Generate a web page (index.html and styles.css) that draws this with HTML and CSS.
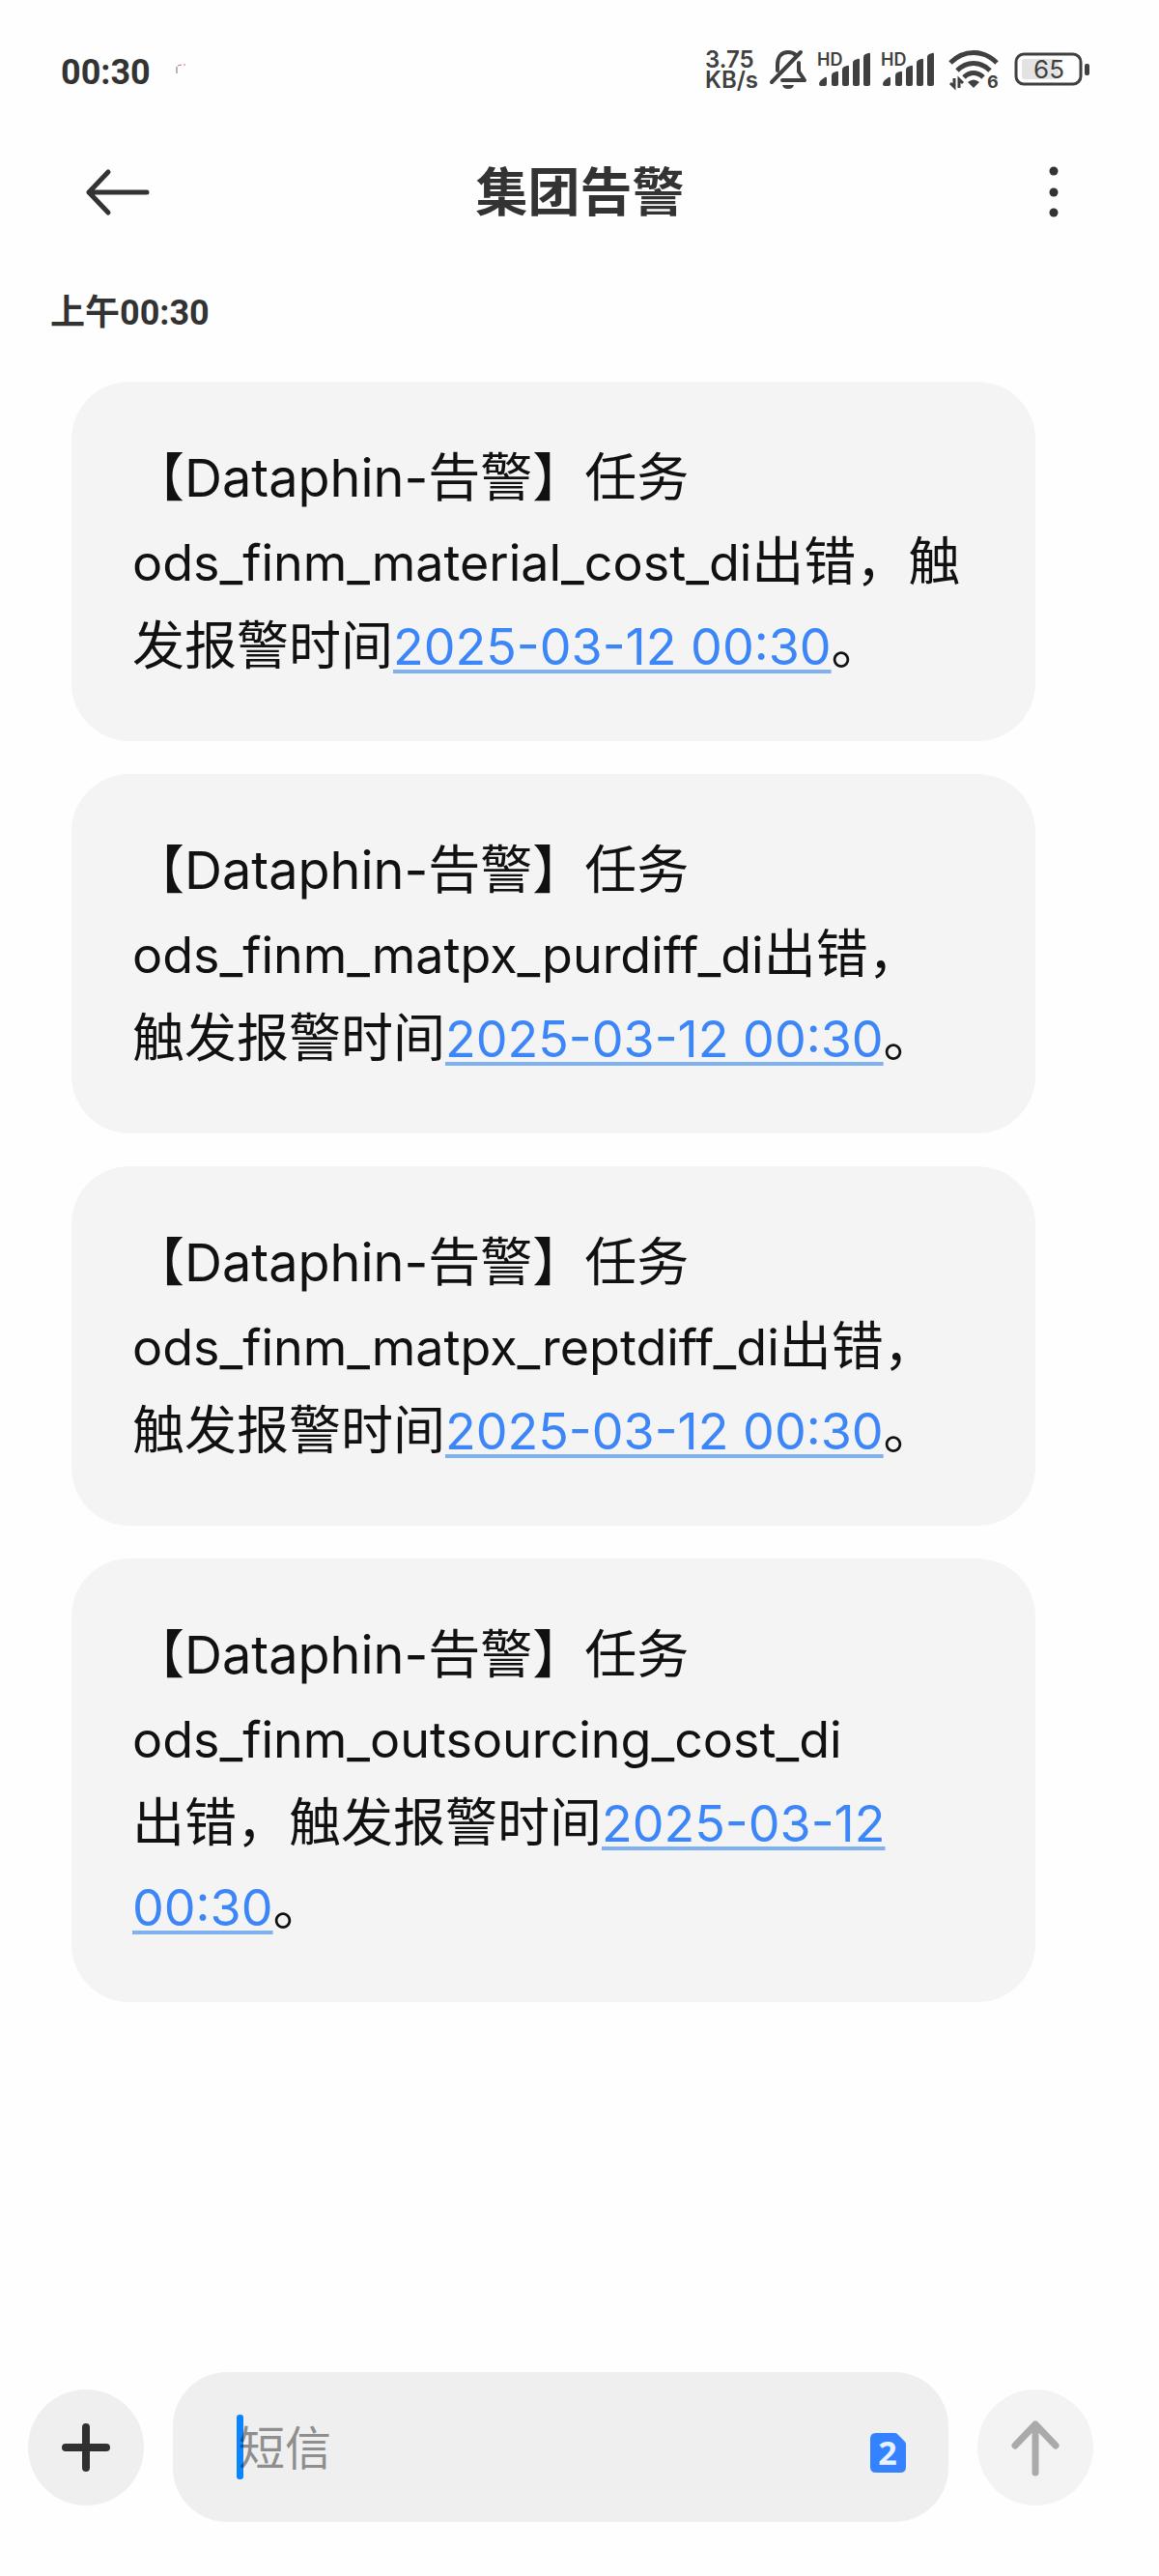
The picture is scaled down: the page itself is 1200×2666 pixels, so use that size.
FILE: index.html
```html
<!DOCTYPE html>
<html lang="zh-CN">
<head>
    <meta charset="UTF-8">
    <meta name="viewport" content="width=device-width, initial-scale=1.0">
    <title>集团告警</title>
    <link rel="stylesheet" href="styles.css">
</head>
<body>
    <div class="status-bar">
        <span class="clock">00:30</span>
        <svg class="notice" width="12" height="12" viewBox="0 0 12 12" fill="none">
            <path d="M1 10V3" stroke="#667078" stroke-width="1"/>
            <path d="M2 2l4-1M8 1h2" stroke="#c07080" stroke-width="1"/>
        </svg>
        <div class="status-icons">
            <div class="speed"><span>3.75</span><span>KB/s</span></div>
            <!-- 静音 -->
            <svg width="40" height="42" viewBox="0 0 40 42" fill="none" stroke="#404040" stroke-width="4" stroke-linecap="round">
                <path d="M9 22v-6C9 8 13 3 20 3c4 0 6 1 8 3"/>
                <path d="M31 14v9l6 9H14" stroke-linejoin="round"/>
                <path d="M3 34L33 3"/>
                <path d="M14 37h12c-1 3-3 4-6 4s-5-1-6-4z" fill="#404040" stroke="none"/>
            </svg>
            <!-- 信号 -->
            <svg class="signal" width="56" height="40" viewBox="0 0 56 40" fill="#404040">
                <text x="0" y="16" class="hd">HD</text>
                <path d="M2 35q0-2 2-4l4-3q2-1 2 1v6q0 2-2 2H4q-2 0-2-2z"/>
                <path d="M15 26q0-2 2-3l3-1q2-1 2 1v12q0 2-2 2h-3q-2 0-2-2z"/>
                <path d="M26 20q0-2 2-3l3-1q2-1 2 1v18q0 2-2 2h-3q-2 0-2-2z"/>
                <path d="M37 13q0-2 2-3l3-1q2-1 2 1v25q0 2-2 2h-3q-2 0-2-2z"/>
                <path d="M48 7q0-2 2-3l3-1q2-1 2 1v31q0 2-2 2h-3q-2 0-2-2z"/>
            </svg>
            <svg class="signal" width="56" height="40" viewBox="0 0 56 40" fill="#404040">
                <text x="0" y="16" class="hd">HD</text>
                <path d="M2 35q0-2 2-4l4-3q2-1 2 1v6q0 2-2 2H4q-2 0-2-2z"/>
                <path d="M15 26q0-2 2-3l3-1q2-1 2 1v12q0 2-2 2h-3q-2 0-2-2z"/>
                <path d="M26 20q0-2 2-3l3-1q2-1 2 1v18q0 2-2 2h-3q-2 0-2-2z"/>
                <path d="M37 13q0-2 2-3l3-1q2-1 2 1v25q0 2-2 2h-3q-2 0-2-2z"/>
                <path d="M48 7q0-2 2-3l3-1q2-1 2 1v31q0 2-2 2h-3q-2 0-2-2z"/>
            </svg>
            <!-- WiFi -->
            <svg class="wifi" width="54" height="42" viewBox="0 0 54 42" fill="none" stroke="#404040" stroke-width="5">
                <path d="M2 14c14-14 34-14 48 0"/>
                <path d="M9 22c10-10 24-10 34 0"/>
                <path d="M16 29c6-6 14-6 20 0"/>
                <path d="M20 34q6-5 12 0l-6 6z" fill="#404040" stroke="none"/>
                <path d="M6 30v9l-4-4M11 40v-9l4 4" stroke-width="3"/>
                <text x="40" y="40" class="wifi-gen">6</text>
            </svg>
            <!-- 电量 -->
            <svg width="78" height="36" viewBox="0 0 78 36">
                <rect x="2" y="2" width="67" height="31" rx="8" fill="none" stroke="#404040" stroke-width="3"/>
                <rect x="8" y="7" width="38" height="21" rx="3" fill="#e3e3e3"/>
                <rect x="73" y="12" width="5" height="12" rx="2" fill="#404040"/>
                <text x="36" y="27" class="battery">65</text>
            </svg>
        </div>
    </div>

    <header class="title-bar">
        <button type="button" class="icon-button" aria-label="返回">
            <svg width="66" height="60" viewBox="0 0 66 60" fill="none" stroke="#333" stroke-width="5" stroke-linecap="round" stroke-linejoin="round">
                <path d="M63 31H3M23 10L3 31l20 21"/>
            </svg>
        </button>
        <h1>集团告警</h1>
        <button type="button" class="icon-button" aria-label="更多">
            <svg width="66" height="60" viewBox="0 0 66 60" fill="#333">
                <circle cx="45" cy="9" r="4.5"/>
                <circle cx="45" cy="31" r="4.5"/>
                <circle cx="45" cy="52" r="4.5"/>
            </svg>
        </button>
    </header>

    <main class="messages">
        <p class="date">上午00:30</p>
        <div class="bubble">
            【Dataphin-告警】任务<br>
            <span class="task">ods_finm_material_cost_di</span>出错，触<br>
            发报警时间<a href="#">2025-03-12 00:30</a>。
        </div>
        <div class="bubble">
            【Dataphin-告警】任务<br>
            <span class="task">ods_finm_matpx_purdiff_di</span>出错，<br>
            触发报警时间<a href="#">2025-03-12 00:30</a>。
        </div>
        <div class="bubble">
            【Dataphin-告警】任务<br>
            <span class="task">ods_finm_matpx_reptdiff_di</span>出错，<br>
            触发报警时间<a href="#">2025-03-12 00:30</a>。
        </div>
        <div class="bubble">
            【Dataphin-告警】任务<br>
            <span class="task">ods_finm_outsourcing_cost_di</span><br>
            出错，触发报警时间<a href="#">2025-03-12<br>00:30</a>。
        </div>
    </main>

    <form class="composer">
        <button type="button" class="round-button" aria-label="添加">
            <svg width="52" height="52" viewBox="0 0 52 52" stroke="#303030" stroke-width="8" stroke-linecap="round">
                <path d="M26 5v42M5 26h42"/>
            </svg>
        </button>
        <div class="field">
            <span class="caret"></span>
            <input type="text" placeholder="短信" aria-label="短信">
            <button type="button" class="sim" aria-label="SIM 卡 2">
                <svg width="37" height="41" viewBox="0 0 37 41">
                    <path d="M6 0h19q2 0 3 1l8 8q1 1 1 3v23q0 6-6 6H6q-6 0-6-6V6q0-6 6-6z" fill="#3482ff"/>
                    <text x="18" y="33" class="sim-number">2</text>
                </svg>
            </button>
        </div>
        <button type="submit" class="round-button send" aria-label="发送">
            <svg width="50" height="60" viewBox="0 0 50 60" fill="none" stroke="#aaa" stroke-width="7" stroke-linecap="round" stroke-linejoin="round">
                <path d="M25 56V6M4 28L25 6l21 22"/>
            </svg>
        </button>
    </form>
</body>
</html>
```
FILE: styles.css
```css
* {
    box-sizing: border-box;
}
body {
    margin: 0;
    min-height: 100vh;
    display: flex;
    flex-direction: column;
    background-color: #fefefe;
    color: #333;
    font-family: Inter, "Noto Sans CJK SC", sans-serif;
}
button {
    padding: 0;
    border: none;
    background: none;
    cursor: pointer;
}
svg {
    display: block;
    overflow: visible;
}

/* 状态栏 */
.status-bar {
    display: flex;
    align-items: center;
    height: 96px;
    margin-top: 24px;
    padding: 0 72px 0 63px;
}
.clock {
    padding-top: 6px;
    font-family: Roboto, sans-serif;
    font-size: 36px;
    font-weight: bold;
    line-height: 48px;
}
.notice {
    margin-left: 26px;
}
.status-icons {
    display: flex;
    align-items: center;
    margin-left: auto;
    color: #404040;
}
.speed {
    display: flex;
    flex-direction: column;
    width: 66px;
    font-size: 24px;
    font-weight: 600;
    line-height: 21px;
}
.signal {
    margin-left: 10px;
}
.wifi {
    margin: 0 14px;
}
.hd {
    font-size: 18px;
    font-weight: 600;
}
.wifi-gen {
    font-size: 18px;
    font-weight: bold;
    fill: #404040;
    stroke: none;
}
.battery {
    font-size: 26px;
    fill: #404040;
    text-anchor: middle;
}

/* 标题栏 */
.title-bar {
    display: flex;
    align-items: center;
    justify-content: space-between;
    height: 156px;
    padding: 0 88px 0 89px;
}
.title-bar h1 {
    margin: 0;
    padding-top: 4px;
    font-size: 54px;
    font-weight: bold;
    line-height: 80px;
}

/* 消息列表 */
.messages {
    display: flex;
    flex-direction: column;
    gap: 34px;
    padding: 0 128px 0 74px;
}
.date {
    margin: 24px 0 0 -22px;
    font-family: Roboto, "Noto Sans CJK SC", sans-serif;
    font-size: 36px;
    font-weight: bold;
    line-height: 48px;
}
.date + .bubble {
    margin-top: 13px;
}
.bubble {
    padding: 56px 54px 55px 63px;
    border-radius: 60px;
    background-color: #f4f4f4;
    color: #111;
    font-size: 54px;
    line-height: 87px;
}
.task {
    font-size: 52px;
    line-height: 1;
}
.bubble a {
    color: #3c86f8;
    font-size: 52px;
    line-height: 1;
    text-decoration: underline 4px #7fb0f0;
    text-underline-offset: 5px;
    text-decoration-skip-ink: none;
}

/* 输入区 */
.composer {
    display: flex;
    align-items: center;
    gap: 30px;
    margin-top: auto;
    padding: 0 68px 56px 29px;
}
.round-button {
    display: flex;
    align-items: center;
    justify-content: center;
    flex: none;
    width: 120px;
    height: 120px;
    border-radius: 50%;
    background-color: #efefef;
}
.send {
    background-color: #f3f3f3;
}
.field {
    position: relative;
    display: flex;
    align-items: center;
    flex: 1;
    height: 155px;
    padding: 0 44px 0 68px;
    border-radius: 56px;
    background-color: #efefef;
}
.caret {
    position: absolute;
    left: 66px;
    width: 7px;
    height: 67px;
    border-radius: 3px;
    background-color: #0a84ff;
}
.field input {
    position: relative;
    flex: 1;
    min-width: 0;
    padding: 0 0 6px;
    border: none;
    outline: none;
    background: none;
    font-family: "Noto Sans CJK SC", sans-serif;
    font-size: 48px;
    line-height: 70px;
}
.field input::placeholder {
    color: #000;
    opacity: 0.4;
}
.sim {
    margin-top: 12px;
}
.sim-number {
    font-family: "Noto Sans", sans-serif;
    font-size: 34px;
    font-weight: bold;
    fill: #e8f2ff;
    text-anchor: middle;
}
```
